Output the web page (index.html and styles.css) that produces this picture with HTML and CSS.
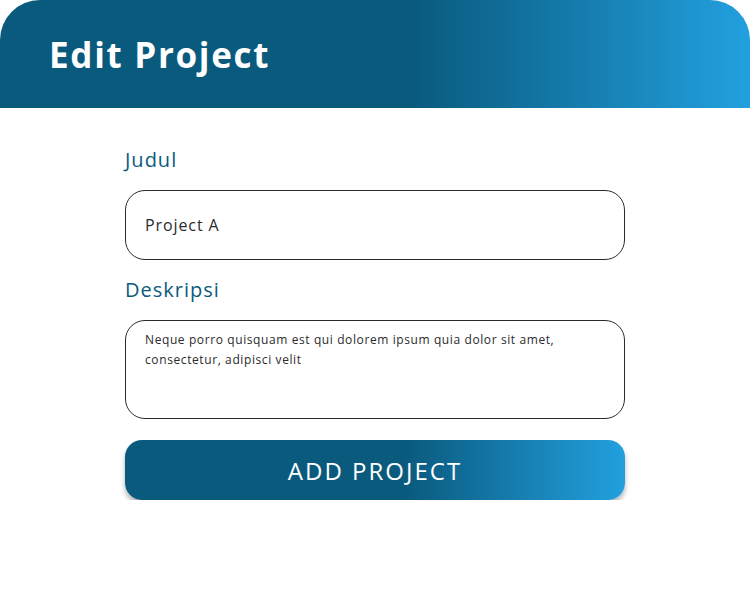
FILE: index.html
```html
<!DOCTYPE html>
<html>
<head>
<meta charset="utf-8">
<link rel="stylesheet" href="styles.css">
</head>
<body>
<header class="header">
  <h1 class="title">Edit Project</h1>
</header>
<main class="form">
  <label class="label">Judul</label>
  <div class="input">Project A</div>
  <label class="label label-desc">Deskripsi</label>
  <div class="textarea">Neque porro quisquam est qui dolorem ipsum quia dolor sit amet, consectetur, adipisci velit</div>
  <button class="btn">ADD PROJECT</button>
</main>
</body>
</html>
```
FILE: styles.css
```css
html, body {
  margin: 0;
  padding: 0;
  background: #ffffff;
  font-family: "Open Sans", "Liberation Sans", sans-serif;
}
.header {
  height: 108px;
  box-sizing: border-box;
  border-radius: 40px 40px 0 0;
  background: linear-gradient(90deg, #0a5a7e 55%, #22a0de 100%);
  display: flex;
  align-items: center;
  padding-left: 49px;
}
.title {
  margin: 0;
  color: #ffffff;
  font-size: 35px;
  font-weight: 700;
  letter-spacing: 1.7px;
  line-height: 40px;
  position: relative;
  top: 1px;
}
.form {
  width: 500px;
  margin: 0 auto;
  padding-top: 38px;
  display: flex;
  flex-direction: column;
}
.label {
  color: #0a5a7e;
  font-size: 20px;
  letter-spacing: 1px;
  line-height: 28px;
  height: 28px;
}
.label-desc {
  margin-top: 16px;
}
.input {
  margin-top: 16px;
  height: 70px;
  box-sizing: border-box;
  border: 1px solid #2b2b2b;
  border-radius: 20px;
  padding: 0 19px;
  display: flex;
  align-items: center;
  font-size: 16px;
  letter-spacing: 0.9px;
  color: #2b2b2b;
}
.textarea {
  margin-top: 16px;
  height: 99px;
  box-sizing: border-box;
  border: 1px solid #2b2b2b;
  border-radius: 20px;
  padding: 9px 19px;
  font-size: 12px;
  letter-spacing: 0.6px;
  line-height: 20px;
  color: #2b2b2b;
}
.btn {
  margin-top: 21px;
  height: 60px;
  border: none;
  border-radius: 17px;
  background: linear-gradient(90deg, #0a5a7e 56%, #22a0de 100%);
  color: #ffffff;
  font-family: "Open Sans", "Liberation Sans", sans-serif;
  font-size: 24px;
  font-weight: 400;
  letter-spacing: 2px;
  box-shadow: 0 4px 5px rgba(0, 0, 0, 0.3);
}
```
